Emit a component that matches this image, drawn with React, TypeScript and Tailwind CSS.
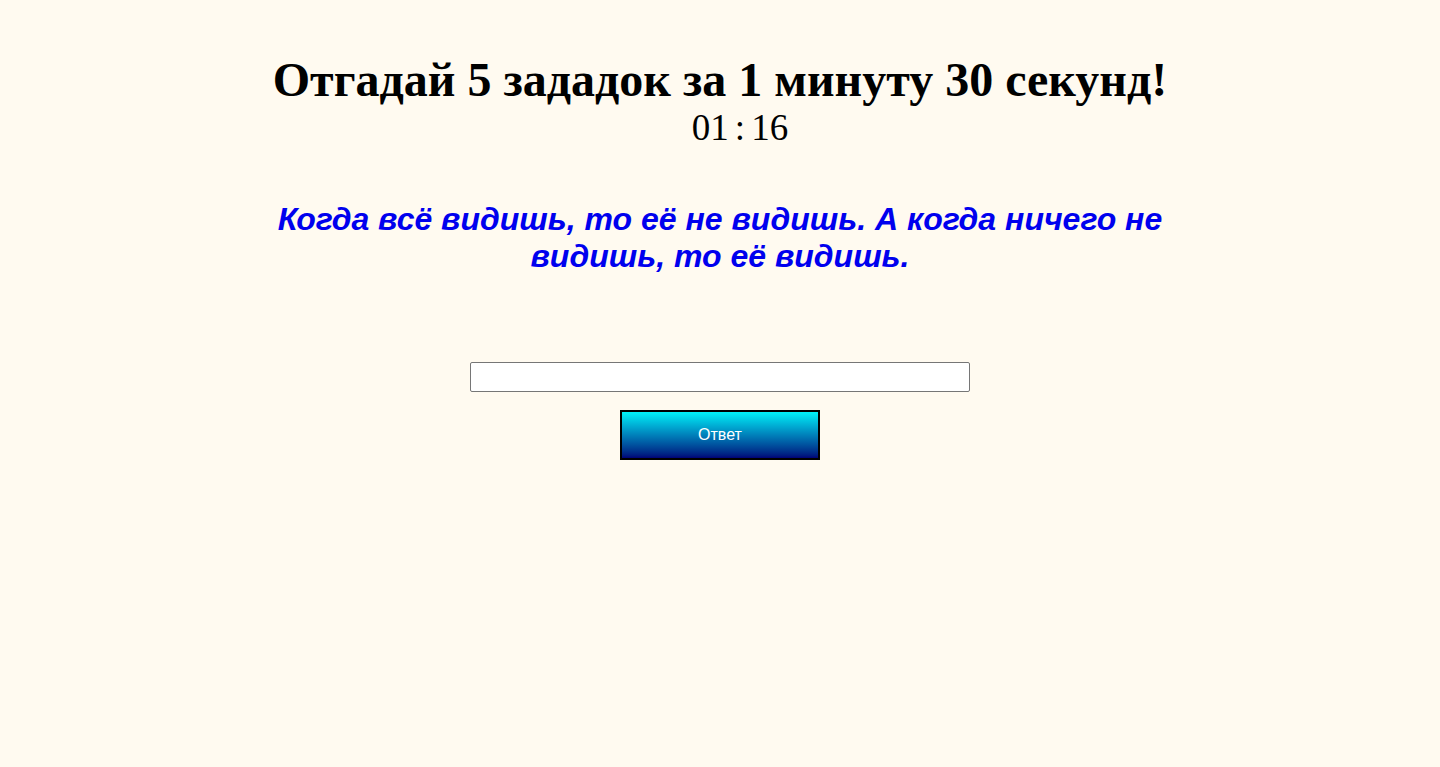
import React, { useState } from 'react';

// Riddle game screen
const App: React.FC = () => {
  const [answer, setAnswer] = useState('');

  return (
    <div className="min-h-screen bg-[#fffaf0] flex flex-col items-center">
      <div className="w-[900px] flex flex-col items-center pt-[22px]">
        <h1 className="font-['Liberation_Serif',serif] font-bold text-[48px] leading-[55px] text-black text-center mt-[30px]">
          Отгадай 5 зададок за 1 минуту 30 секунд!
        </h1>
        <div className="ml-[40px] flex items-baseline font-['Liberation_Serif',serif] text-[37px] leading-[42px] text-black">
          <span>01</span>
          <span className="mx-[6px]">:</span>
          <span>16</span>
        </div>
        <p className="font-['Liberation_Sans',Arial,sans-serif] font-bold italic text-[32px] leading-[37px] text-[#0000ee] text-center mt-[52px]">
          Когда всё видишь, то её не видишь. А когда ничего не видишь, то её видишь.
        </p>
        <input
          type="text"
          value={answer}
          onChange={(e) => setAnswer(e.target.value)}
          className="mt-[87px] w-[500px] h-[30px] bg-white border border-[#767676] rounded-[2px] px-1 outline-none"
        />
        <button
          type="button"
          className="mt-[18px] w-[200px] h-[50px] border-2 border-black bg-gradient-to-b from-[#00f2f8] to-[#000078] text-white font-['Liberation_Sans',Arial,sans-serif] text-[16px]"
        >
          Ответ
        </button>
      </div>
    </div>
  );
};

export default App;
